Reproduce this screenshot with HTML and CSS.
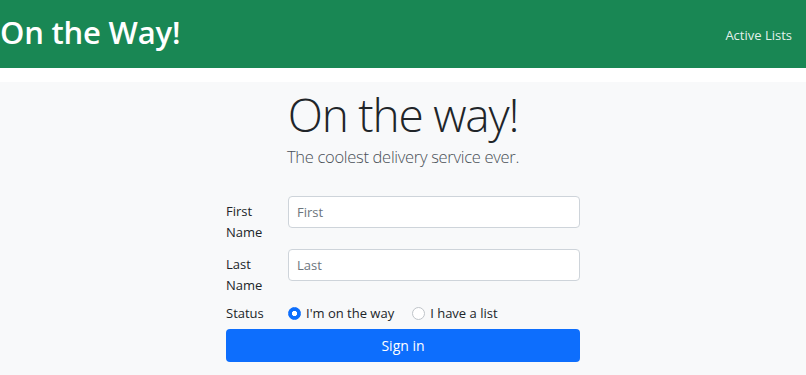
FILE: index.html
```html
<!DOCTYPE html>
<html lang="en">
<head>
<meta charset="utf-8">
<title>On the Way!</title>
<link rel="stylesheet" href="styles.css">
</head>
<body>
<nav class="topbar">
  <span class="brand">On the Way!</span>
  <a class="nav-link" href="#">Active Lists</a>
</nav>
<main class="hero">
  <h1 class="title">On the way!</h1>
  <p class="lead">The coolest delivery service ever.</p>
  <form class="signin">
    <div class="row">
      <label class="label" for="first">First Name</label>
      <input class="field" id="first" type="text" placeholder="First">
    </div>
    <div class="row row-second">
      <label class="label" for="last">Last Name</label>
      <input class="field" id="last" type="text" placeholder="Last">
    </div>
    <div class="row status-row">
      <span class="label status-label">Status</span>
      <div class="radios">
        <label class="radio-opt"><input class="radio" type="radio" name="status" checked><span>I'm on the way</span></label>
        <label class="radio-opt"><input class="radio" type="radio" name="status"><span>I have a list</span></label>
      </div>
    </div>
    <button class="submit" type="button">Sign in</button>
  </form>
</main>
</body>
</html>
```

FILE: styles.css
```css
html, body {
  margin: 0;
  padding: 0;
  background: #ffffff;
  font-family: "Open Sans", "Noto Sans", sans-serif;
  color: #212529;
}

.topbar {
  height: 68px;
  background: #198754;
  display: flex;
  align-items: center;
  justify-content: space-between;
  padding: 0 14px 0 0;
}

.brand {
  color: #ffffff;
  font-size: 31px;
  font-weight: 600;
  line-height: 40px;
  margin-bottom: 4px;
  letter-spacing: -0.2px;
}

.nav-link {
  color: rgba(255, 255, 255, 0.9);
  text-decoration: none;
  font-size: 13px;
  line-height: 20px;
  margin-top: 2px;
}

.hero {
  margin-top: 14px;
  background: #f8f9fa;
  min-height: 293px;
  text-align: center;
  padding-top: 4px;
}

.title {
  margin: 0;
  font-size: 46px;
  font-weight: 300;
  line-height: 56px;
  letter-spacing: -1.2px;
  color: #212529;
}

.lead {
  margin: 1px 0 0;
  font-size: 16.5px;
  font-weight: 300;
  line-height: 27px;
  letter-spacing: -0.3px;
  color: #495057;
}

.signin {
  width: 354px;
  margin: 26px auto 0;
  text-align: left;
}

.row {
  display: grid;
  grid-template-columns: 62px 292px;
  align-items: start;
}

.row-second {
  margin-top: 1px;
}

.label {
  font-size: 13px;
  line-height: 21px;
  padding: 5px 0;
  width: 40px;
  color: #212529;
}

.field {
  box-sizing: border-box;
  height: 32px;
  width: 292px;
  border: 1px solid #ced4da;
  border-radius: 4px;
  background: #ffffff;
  padding: 0 8px;
  font-family: inherit;
  font-size: 13px;
  color: #212529;
  outline: none;
}

.field::placeholder {
  color: #6c757d;
}

.status-row {
  margin-top: 1px;
  align-items: center;
}

.status-label {
  padding: 1px 0;
}

.radios {
  display: flex;
  align-items: center;
  gap: 18px;
}

.radio-opt {
  display: flex;
  align-items: center;
  gap: 5px;
  font-size: 13px;
  line-height: 21px;
  color: #212529;
}

.radio {
  appearance: none;
  -webkit-appearance: none;
  margin: 0;
  width: 13px;
  height: 13px;
  border-radius: 50%;
  border: 1px solid #bfc4c9;
  background: #ffffff;
  box-sizing: border-box;
}

.radio:checked {
  border-color: #0d6efd;
  background: radial-gradient(circle, #ffffff 0 2.4px, #0d6efd 2.9px);
}

.submit {
  display: block;
  box-sizing: border-box;
  width: 354px;
  height: 33px;
  margin-top: 4px;
  border: 0;
  border-radius: 4px;
  background: #0d6efd;
  color: #ffffff;
  font-family: inherit;
  font-size: 14px;
  line-height: 20px;
}
```
